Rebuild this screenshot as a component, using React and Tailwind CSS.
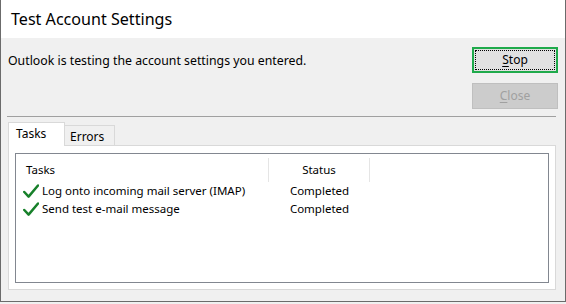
import React from "react";

const Check = () => (
	<svg width="16" height="15" viewBox="0 0 16 15" className="shrink-0">
		<path
			d="M1.3 8 L5.6 12.6 L15 1.5"
			fill="none"
			stroke="#17802a"
			strokeWidth="2.5"
			strokeLinecap="round"
			strokeLinejoin="round"
		/>
	</svg>
);

const rows = [
	{ task: "Log onto incoming mail server (IMAP)", status: "Completed" },
	{ task: "Send test e-mail message", status: "Completed" },
];

export default function App() {
	return (
		<div
			className="w-[566px] h-[304px] overflow-hidden bg-[#f0f0f0] text-black"
			style={{ fontFamily: '"Noto Sans", "Open Sans", sans-serif' }}
		>
			<div className="h-[302px] flex flex-col border-x border-b border-[#6b6b6b]">
				{/* title bar */}
				<div className="h-[38px] bg-white pl-[10px] flex items-center text-[16.1px] leading-none">
					Test Account Settings
				</div>

				{/* message + buttons */}
				<div className="flex justify-between pl-[7px] pr-[7px] pt-[9px]">
					<p className="text-[12.3px] leading-[16px] mt-[6px]">
						Outlook is testing the account settings you entered.
					</p>
					<div className="flex flex-col gap-[10px]">
						<button className="w-[86px] h-[26px] border-2 border-[#1faa4b] bg-[#e1e1e1] p-px">
							<span className="flex h-full w-full items-center justify-center border border-dotted border-black text-[12px]">
								<span className="underline underline-offset-2">S</span>top
							</span>
						</button>
						<button className="w-[86px] h-[26px] border border-[#bfbfbf] bg-[#cccccc] text-[12px] text-[#a0a0a0] flex items-center justify-center">
							<span className="underline underline-offset-2">C</span>lose
						</button>
					</div>
				</div>

				<div className="h-px bg-[#a0a0a0] mt-[7px] ml-[6px] mr-[9px]" />

				{/* tabs */}
				<div className="ml-[7px] mr-[9px] mt-[5px] flex flex-col">
					<div className="flex items-end h-[24px] text-[12px]">
						<div className="relative z-10 w-[57px] h-[24px] bg-white border border-b-0 border-[#d9d9d9] flex items-center pl-[7px] pb-px">
							Tasks
						</div>
						<div className="w-[50px] h-[21px] bg-[#f0f0f0] border border-l-0 border-b-0 border-[#d9d9d9] flex items-center pl-[5px] pt-[2px]">
							Errors
						</div>
					</div>
					<div className="h-[145px] bg-white border border-[#d9d9d9] -mt-px px-[6px] pt-[7px] pb-[6px]">
						<div className="h-full border border-[#828790] text-[11.5px]">
							<div className="flex h-[24px] mt-[4px]">
								<div className="w-[253px] border-r border-[#e5e5e5] pl-[10px] flex items-center">
									Tasks
								</div>
								<div className="w-[101px] border-r border-[#e5e5e5] flex items-center justify-center">
									Status
								</div>
							</div>
							<div className="flex flex-col">
								{rows.map((r, i) => (
									<div key={i} className="flex h-[18px] items-center">
										<div className="w-[253px] pl-[7px] flex items-center gap-[3px]">
											<Check />
											<span>{r.task}</span>
										</div>
										<div className="w-[101px] flex justify-center">{r.status}</div>
									</div>
								))}
							</div>
						</div>
					</div>
				</div>
			</div>
		</div>
	);
}
